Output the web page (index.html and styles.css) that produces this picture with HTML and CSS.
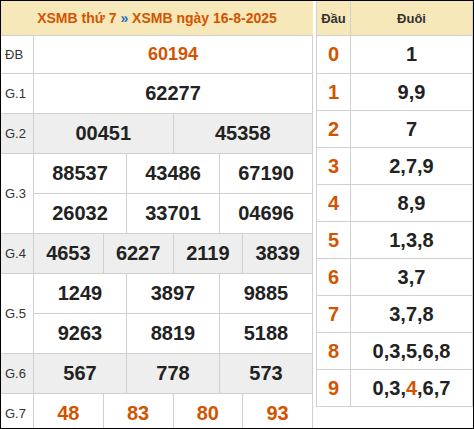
FILE: index.html
```html
<!DOCTYPE html>
<html lang="vi">
<head>
<meta charset="utf-8">
<title>XSMB ngày 16-8-2025</title>
<link rel="stylesheet" href="styles.css">
</head>
<body>
<div class="frame">
  <div class="wrap">
    <section class="results">
      <div class="title"><span class="hl">XSMB thứ 7</span> <span class="sep">»</span> <span class="hl">XSMB ngày 16-8-2025</span></div>
      <div class="grid">
        <div class="lbl">ĐB</div>
        <div class="c s12 special">60194</div>

        <div class="lbl">G.1</div>
        <div class="c s12">62277</div>

        <div class="lbl alt">G.2</div>
        <div class="c s6 alt">00451</div>
        <div class="c s6 alt">45358</div>

        <div class="lbl r2">G.3</div>
        <div class="c s4">88537</div>
        <div class="c s4">43486</div>
        <div class="c s4">67190</div>
        <div class="c s4">26032</div>
        <div class="c s4">33701</div>
        <div class="c s4">04696</div>

        <div class="lbl alt">G.4</div>
        <div class="c s3 alt">4653</div>
        <div class="c s3 alt">6227</div>
        <div class="c s3 alt">2119</div>
        <div class="c s3 alt">3839</div>

        <div class="lbl r2">G.5</div>
        <div class="c s4">1249</div>
        <div class="c s4">3897</div>
        <div class="c s4">9885</div>
        <div class="c s4">9263</div>
        <div class="c s4">8819</div>
        <div class="c s4">5188</div>

        <div class="lbl alt">G.6</div>
        <div class="c s4 alt">567</div>
        <div class="c s4 alt">778</div>
        <div class="c s4 alt">573</div>

        <div class="lbl">G.7</div>
        <div class="c s3 red">48</div>
        <div class="c s3 red">83</div>
        <div class="c s3 red">80</div>
        <div class="c s3 red">93</div>
      </div>
    </section>

    <section class="loto">
      <div class="th">Đầu</div><div class="th">Đuôi</div>
      <div class="hd">0</div><div class="tl">1</div>
      <div class="hd">1</div><div class="tl">9,9</div>
      <div class="hd">2</div><div class="tl">7</div>
      <div class="hd">3</div><div class="tl">2,7,9</div>
      <div class="hd">4</div><div class="tl">8,9</div>
      <div class="hd">5</div><div class="tl">1,3,8</div>
      <div class="hd">6</div><div class="tl">3,7</div>
      <div class="hd">7</div><div class="tl">3,7,8</div>
      <div class="hd">8</div><div class="tl">0,3,5,6,8</div>
      <div class="hd">9</div><div class="tl">0,3,<span class="red">4</span>,6,7</div>
    </section>
  </div>
</div>
</body>
</html>
```

FILE: styles.css
```css
* { box-sizing: border-box; }

body {
  margin: 0;
  background: #fff;
  font-family: "Liberation Sans", Arial, sans-serif;
  color: #222;
}

.frame {
  width: 474px;
  height: 429px;
  border: 1px solid #000;
  overflow: hidden;
  background: #fff;
}

.wrap {
  display: flex;
  align-items: flex-start;
  gap: 3px;
}

/* ---------- results table ---------- */
.results {
  width: 312px;
  flex: none;
}

.title {
  height: 34px;
  line-height: 34px;
  background: #f7e8ba;
  text-align: center;
  font-size: 14px;
  font-weight: bold;
  color: #d35400;
  white-space: nowrap;
}

.title .sep { color: #1f6fc2; }

.grid {
  display: grid;
  grid-template-columns: 32px repeat(12, 1fr);
  grid-template-rows: 37px repeat(9, 39px);
  gap: 1px;
  background: #d0d0d0;
  border-top: 1px solid #d0d0d0;
  border-right: 1px solid #d0d0d0;
}

.lbl {
  background: #fff;
  display: flex;
  align-items: center;
  padding-left: 4px;
  font-size: 13px;
  color: #333;
}

.r2 { grid-row: span 2; }

.c {
  background: #fff;
  display: flex;
  align-items: center;
  justify-content: center;
  font-size: 20px;
  font-weight: bold;
  color: #222;
}

.s12 { grid-column: span 12; }
.s6 { grid-column: span 6; }
.s4 { grid-column: span 4; }
.s3 { grid-column: span 3; }

.alt { background: #eeeeee; }

.special {
  font-size: 18px;
  color: #d35400;
}

.red { color: #d35400; }

/* ---------- loto table ---------- */
.loto {
  width: 157px;
  flex: none;
  display: grid;
  grid-template-columns: 33px 1fr;
  grid-template-rows: 34px 37px repeat(9, 36px);
  gap: 1px;
  background: #d0d0d0;
  border: 1px solid #d0d0d0;
  border-top: 0;
}

.th {
  background: #f7e8ba;
  display: flex;
  align-items: center;
  justify-content: center;
  font-size: 13px;
  font-weight: bold;
  color: #333;
}

.hd,
.tl {
  background: #fff;
  display: flex;
  align-items: center;
  justify-content: center;
  font-size: 20px;
  font-weight: bold;
}

.hd { color: #d35400; }
.tl { color: #222; }
```
